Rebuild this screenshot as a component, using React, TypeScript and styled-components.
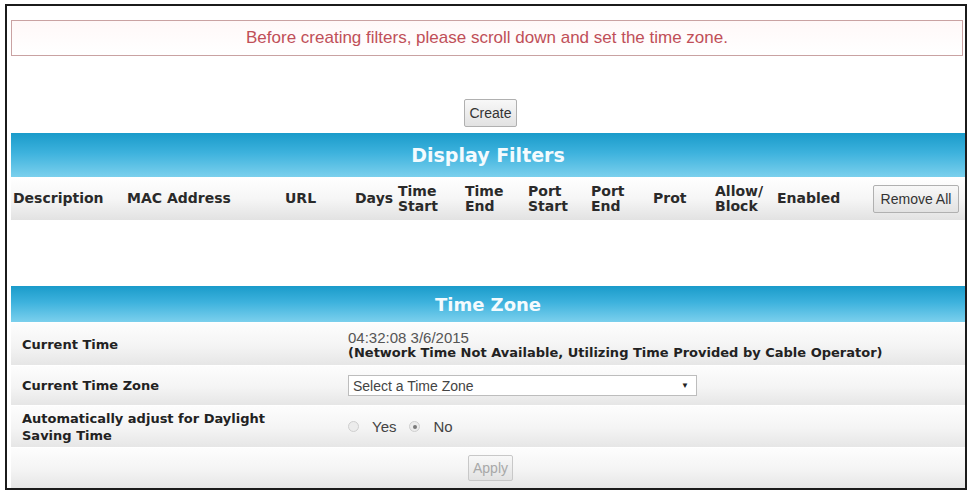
import React from "react";
import styled, { createGlobalStyle } from "styled-components";

const GlobalStyle = createGlobalStyle`
  html, body { margin: 0; padding: 0; background: #fff; }
  body { font-family: "Liberation Sans", Arial, sans-serif; }
  * { box-sizing: border-box; }
`;

const Frame = styled.div`
  margin: 4px 0 0 5px;
  width: 962px;
  height: 486px;
  border: 2px solid #1b1b1b;
  padding-left: 4px;
  display: flex;
  flex-direction: column;
  background: #fff;
  overflow: hidden;
`;

const Notice = styled.div`
  margin: 14px 2px 0 0;
  height: 36px;
  border: 1px solid #c9a2a2;
  background: linear-gradient(#fff8f8, #ffffff);
  color: #c04f58;
  font-size: 17px;
  line-height: 34px;
  text-align: center;
`;

const CreateRow = styled.div`
  height: 77px;
  display: flex;
  align-items: flex-start;
  justify-content: center;
  padding: 43px 0 0 5px;
`;

const Button = styled.button<{ $disabled?: boolean; $w: number; $h: number }>`
  width: ${(p) => p.$w}px;
  height: ${(p) => p.$h}px;
  padding: 0;
  font-family: "Liberation Sans", Arial, sans-serif;
  font-size: 14px;
  color: ${(p) => (p.$disabled ? "#a8a8a8" : "#333")};
  background: linear-gradient(#f8f8f8, #e2e2e2);
  border: 1px solid ${(p) => (p.$disabled ? "#c8c8c8" : "#b0b0b0")};
  border-radius: 2px;
  cursor: default;
`;

const SectionBar = styled.div<{ $h: number; $size: number }>`
  height: ${(p) => p.$h}px;
  display: flex;
  align-items: center;
  justify-content: center;
  background: linear-gradient(#1a9bca 0%, #3db2dd 45%, #7bd0ed 100%);
  color: #f4fbfe;
  font-family: "DejaVu Sans", Verdana, sans-serif;
  font-weight: bold;
  font-size: ${(p) => p.$size}px;
`;

const HeaderGrid = styled.div`
  height: 43px;
  display: grid;
  grid-template-columns: 114px 158px 70px 43px 67px 63px 63px 62px 62px 62px 96px 94px;
  align-items: center;
  background: linear-gradient(#ffffff 0%, #f6f6f6 50%, #e2e2e2 100%);
  font-family: "DejaVu Sans", Verdana, sans-serif;
  font-weight: bold;
  font-size: 14px;
  line-height: 15px;
  color: #2a2a2a;
`;

const HeadCell = styled.div`
  padding-left: 2px;
`;

const EmptyArea = styled.div`
  height: 66px;
`;

const Row = styled.div<{ $h: number }>`
  height: ${(p) => p.$h}px;
  display: grid;
  grid-template-columns: 337px 1fr;
  align-items: center;
  background: linear-gradient(#fdfdfd 0%, #f4f4f4 55%, #e6e6e6 100%);
  border-top: 1px solid #ffffff;
`;

const ApplyRow = styled.div`
  height: 41px;
  display: flex;
  align-items: center;
  justify-content: center;
  padding-left: 5px;
  background: linear-gradient(#fdfdfd 0%, #f4f4f4 55%, #e6e6e6 100%);
  border-top: 1px solid #ffffff;
`;

const Label = styled.div`
  padding-left: 11px;
  font-family: "DejaVu Sans", Verdana, sans-serif;
  font-weight: bold;
  font-size: 13px;
  line-height: 17px;
  color: #222;
`;

const Value = styled.div`
  display: flex;
  flex-direction: column;
  padding-top: 2px;
`;

const Stamp = styled.span`
  font-size: 15px;
  line-height: 15px;
  color: #555;
`;

const Note = styled.span`
  font-family: "DejaVu Sans", Verdana, sans-serif;
  font-weight: bold;
  font-size: 13px;
  line-height: 16px;
  color: #222;
`;

const SelectBox = styled.div`
  width: 349px;
  height: 21px;
  border: 1px solid #bdbdbd;
  background: #fff;
  display: flex;
  align-items: center;
  justify-content: space-between;
  padding: 0 7px 0 4px;
  font-size: 14px;
  color: #444;
`;

const Arrow = styled.span`
  font-size: 8px;
  color: #222;
`;

const RadioGroup = styled.div`
  display: flex;
  align-items: center;
  gap: 13px;
  padding-left: 0;
  font-size: 15px;
  color: #444;
`;

const Radio = styled.span<{ $on?: boolean }>`
  width: 11px;
  height: 11px;
  border-radius: 50%;
  border: 1px solid #cfcfcf;
  background: #ececec;
  display: inline-flex;
  align-items: center;
  justify-content: center;
  &::after {
    content: "";
    width: 4px;
    height: 4px;
    border-radius: 50%;
    background: ${(p) => (p.$on ? "#7a7a7a" : "transparent")};
  }
`;

const columns = [
  "Description",
  "MAC Address",
  "URL",
  "Days",
  "Time\nStart",
  "Time\nEnd",
  "Port\nStart",
  "Port\nEnd",
  "Prot",
  "Allow/\nBlock",
  "Enabled",
];

export default function App() {
  return (
    <>
      <GlobalStyle />
      <Frame>
        <Notice>Before creating filters, please scroll down and set the time zone.</Notice>
        <CreateRow>
          <Button $w={53} $h={28}>Create</Button>
        </CreateRow>
        <SectionBar $h={44} $size={19}>Display Filters</SectionBar>
        <HeaderGrid>
          {columns.map((c) => (
            <HeadCell key={c}>
              {c.split("\n").map((l, i) => (
                <div key={i}>{l}</div>
              ))}
            </HeadCell>
          ))}
          <HeadCell>
            <Button $w={86} $h={28}>Remove All</Button>
          </HeadCell>
        </HeaderGrid>
        <EmptyArea />
        <SectionBar $h={36} $size={18}>Time Zone</SectionBar>
        <Row $h={43}>
          <Label>Current Time</Label>
          <Value>
            <Stamp>04:32:08 3/6/2015</Stamp>
            <Note>(Network Time Not Available, Utilizing Time Provided by Cable Operator)</Note>
          </Value>
        </Row>
        <Row $h={40}>
          <Label>Current Time Zone</Label>
          <SelectBox>
            <span>Select a Time Zone</span>
            <Arrow>▼</Arrow>
          </SelectBox>
        </Row>
        <Row $h={42}>
          <Label>
            Automatically adjust for Daylight
            <br />
            Saving Time
          </Label>
          <RadioGroup>
            <Radio />
            <span>Yes</span>
            <Radio $on />
            <span>No</span>
          </RadioGroup>
        </Row>
        <ApplyRow>
          <Button $disabled $w={45} $h={26}>Apply</Button>
        </ApplyRow>
      </Frame>
    </>
  );
}
